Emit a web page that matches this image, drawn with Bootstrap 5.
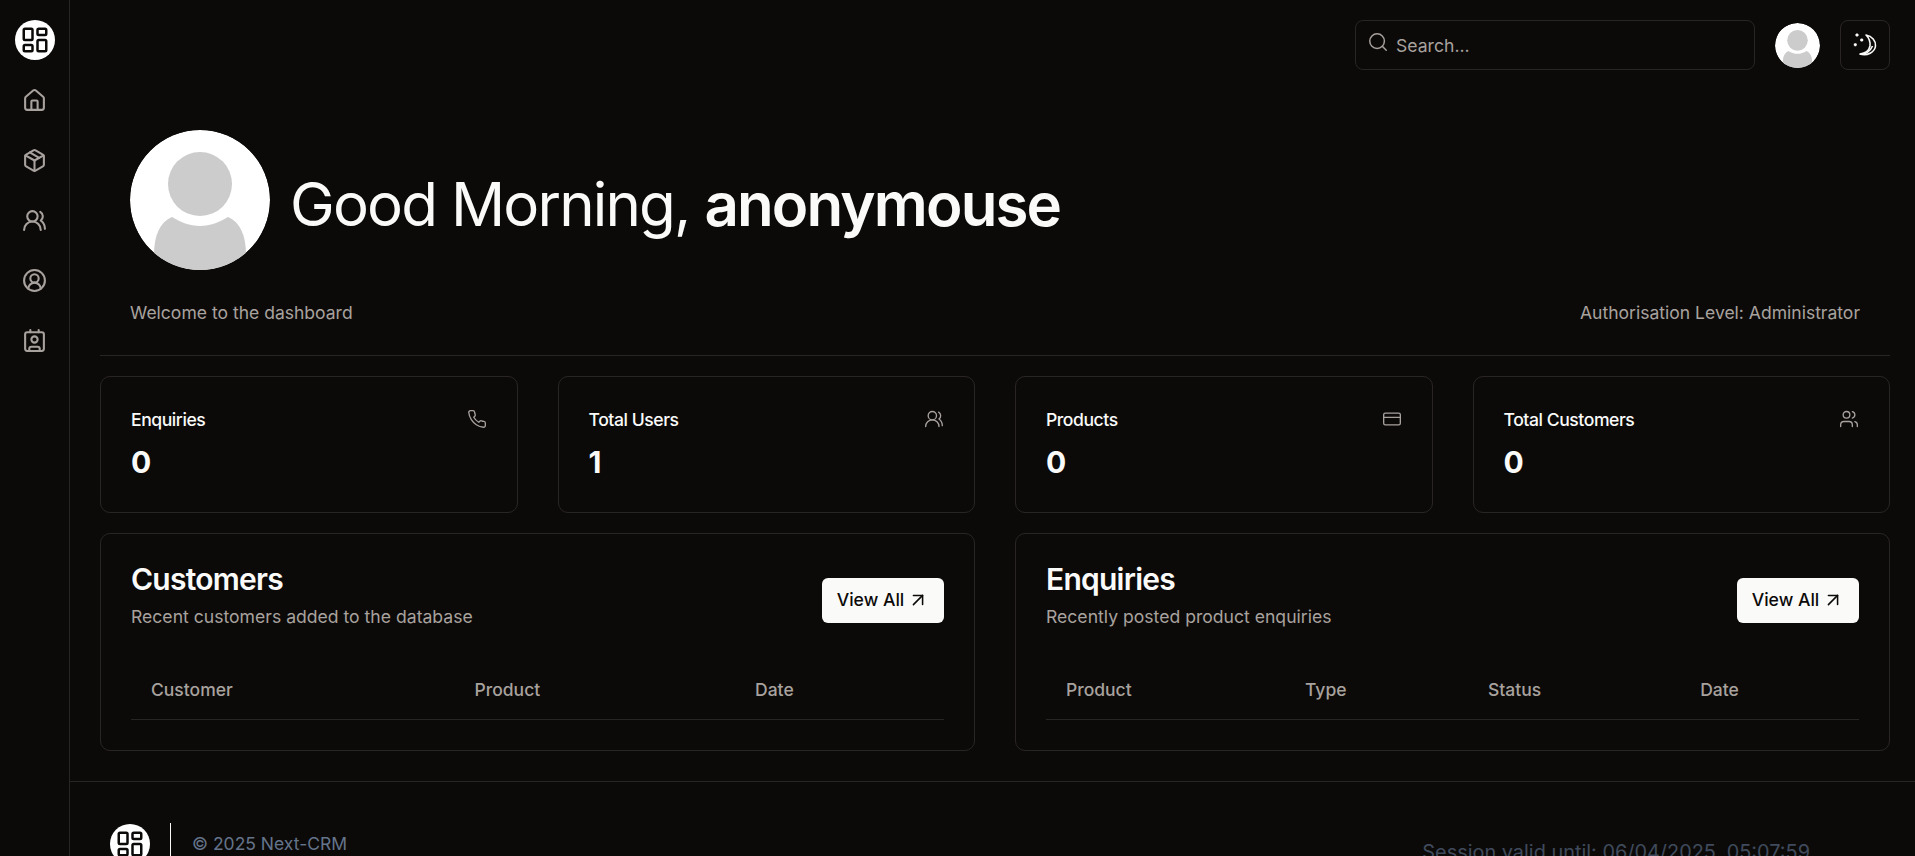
<!DOCTYPE html>
<html lang="en">
<head>
  <meta charset="UTF-8" />
  <meta name="viewport" content="width=device-width, initial-scale=1.0"/>
  <title>Next-CRM</title>
  <link href="https://cdn.jsdelivr.net/npm/bootstrap@5.3.0/dist/css/bootstrap.min.css" rel="stylesheet">
  <style>
    html, body {
      height: 100vh;
      overflow: hidden;
    }
    body {
      background-color: #0c0a09;
      color: #fafaf9;
      font-family: Inter, "Liberation Sans", sans-serif;
    }
    svg { display: block; flex: none; }
    .ico {
      fill: none;
      stroke: currentColor;
      stroke-width: 2;
      stroke-linecap: round;
      stroke-linejoin: round;
    }
    .ico-thin { stroke-width: 1.6; }
    .side-rail {
      width: 70px;
      height: 100vh;
      border-right: 1px solid #292524;
      color: #a8a29e;
      padding-top: 20px;
      flex: none;
    }
    .brand-dot {
      width: 40px;
      height: 40px;
      border-radius: 50%;
      background: #fff;
      color: #0c0a09;
    }
    .side-rail .brand-dot { margin-bottom: 10px; }
    .rail-link {
      width: 36px;
      height: 60px;
      color: #a8a29e;
    }
    .top-bar {
      height: 90px;
      padding: 20px 25px 0 0;
      gap: 20px;
    }
    .search-box {
      width: 400px;
      height: 50px;
      border: 1px solid #292524;
      border-radius: 8px;
      padding-left: 11px;
      color: #a8a29e;
    }
    .search-box svg { margin-top: -6px; }
    .search-box input {
      background: transparent;
      border: 0;
      box-shadow: none;
      color: #fafaf9;
      padding: 2px 0 0 7px;
      font-size: 17.6px;
    }
    .search-box input::placeholder { color: #a8a29e; opacity: 1; }
    .search-box input:focus { background: transparent; color: #fafaf9; box-shadow: none; }
    .theme-btn {
      width: 50px;
      height: 50px;
      border: 1px solid #292524;
      border-radius: 8px;
      color: #fafaf9;
      padding: 0;
    }
    .avatar-pic { border-radius: 50%; }
    .avatar-top { margin-top: 3px; }
    .page-wrap { padding: 0 25px 0 30px; }
    .hero-zone { padding: 40px 30px 0; }
    .hero-title {
      font-size: 60px;
      font-weight: 400;
      line-height: 1;
      letter-spacing: -1.86px;
      margin: 0 0 0 20px;
      padding-top: 8px;
      color: #fafaf9;
    }
    .hero-title b { font-weight: 600; }
    .hero-sub {
      margin-top: 31px;
      padding-bottom: 30px;
      color: #a8a29e;
      font-size: 17.55px;
      line-height: 24px;
    }
    .top-rule {
      border-top: 1px solid #292524;
      margin-bottom: 20px;
    }
    .stat-row { --bs-gutter-x: 40px; --bs-gutter-y: 20px; }
    .panel-card {
      background: transparent;
      border: 1px solid #292524;
      border-radius: 10px;
      color: #fafaf9;
      padding: 30px;
    }
    .stat-box { padding-bottom: 32px; }
    .stat-name {
      font-size: 17.6px;
      font-weight: 500;
      line-height: 24px;
      letter-spacing: -0.45px;
      color: #fafaf9;
      position: relative;
      top: 1px;
    }
    .stat-ico { color: #a8a29e; }
    .stat-val {
      font-size: 30px;
      font-weight: 700;
      line-height: 36px;
      margin-top: 13px;
    }
    .panel-head { height: 72px; }
    .panel-title {
      font-size: 30px;
      font-weight: 600;
      line-height: 36px;
      letter-spacing: -0.75px;
      margin: -3px 0 0;
    }
    .panel-sub {
      font-size: 17.6px;
      line-height: 24px;
      color: #a8a29e;
      margin: 8px 0 0;
    }
    .view-btn {
      height: 45px;
      width: 122px;
      background: #fafaf9;
      color: #0c0a09;
      border: 0;
      border-radius: 6px;
      font-size: 17.6px;
      font-weight: 450;
      padding: 0;
      gap: 3px;
    }
    .view-btn svg { stroke-width: 1.7; }
    .data-tbl {
      --bs-table-bg: transparent;
      --bs-table-color: #a8a29e;
      margin: 20px 0 0;
      table-layout: fixed;
    }
    .data-tbl th {
      height: 63px;
      padding: 6px 0 0 20px;
      font-size: 17.5px;
      font-weight: 500;
      color: #a8a29e;
      border-bottom: 1px solid #292524;
      vertical-align: middle;
    }
    .cw-a { width: 39.8%; }
    .cw-b { width: 34.5%; }
    .cw-c { width: 25.7%; }
    .ew-a { width: 29.4%; }
    .ew-b { width: 22.5%; }
    .ew-c { width: 26.1%; }
    .ew-d { width: 22%; }
    .foot-bar {
      border-top: 1px solid #292524;
      margin-top: 30px;
      padding: 42px 105px 0 40px;
    }
    .foot-rule {
      width: 1px;
      height: 40px;
      background: #fafaf9;
      margin: -1px 21px 0 20px;
    }
    .foot-copy {
      color: #64748b;
      font-size: 17.5px;
      line-height: 28px;
      padding-top: 6px;
    }
    .foot-session {
      color: #3f4a5c;
      font-size: 19.9px;
      line-height: 28px;
      padding-top: 14px;
    }
  </style>
</head>
<body>
  <div class="d-flex">
    <nav class="side-rail d-flex flex-column align-items-center">
      <a href="#" class="brand-dot d-flex align-items-center justify-content-center">
        <svg class="ico" width="30" height="30" viewBox="0 0 24 24"><rect x="3" y="3" width="7" height="9" rx="1"/><rect x="14" y="3" width="7" height="5" rx="1"/><rect x="14" y="12" width="7" height="9" rx="1"/><rect x="3" y="16" width="7" height="5" rx="1"/></svg>
      </a>
      <a href="#" class="rail-link d-flex align-items-center justify-content-center">
        <svg class="ico" width="25" height="25" viewBox="0 0 24 24"><path d="M15 21v-8a1 1 0 0 0-1-1h-4a1 1 0 0 0-1 1v8"/><path d="M3 10a2 2 0 0 1 .709-1.528l7-5.999a2 2 0 0 1 2.582 0l7 5.999A2 2 0 0 1 21 10v9a2 2 0 0 1-2 2H5a2 2 0 0 1-2-2z"/></svg>
      </a>
      <a href="#" class="rail-link d-flex align-items-center justify-content-center">
        <svg class="ico" width="25" height="25" viewBox="0 0 24 24"><path d="M21 8a2 2 0 0 0-1-1.730l-7-4a2 2 0 0 0-2 0l-7 4A2 2 0 0 0 3 8v8a2 2 0 0 0 1 1.730l7 4a2 2 0 0 0 2 0l7-4A2 2 0 0 0 21 16Z"/><path d="m3.300 7 8.700 5 8.700-5"/><path d="M12 22V12"/><path d="m7.500 4.270 9 5.150"/></svg>
      </a>
      <a href="#" class="rail-link d-flex align-items-center justify-content-center">
        <svg class="ico" width="25" height="25" viewBox="0 0 24 24"><path d="M18 21a8 8 0 0 0-16 0"/><circle cx="10" cy="8" r="5"/><path d="M22 20c0-3.370-2-6.500-4-8a5 5 0 0 0-.45-8.300"/></svg>
      </a>
      <a href="#" class="rail-link d-flex align-items-center justify-content-center">
        <svg class="ico" width="25" height="25" viewBox="0 0 24 24"><circle cx="12" cy="12" r="10"/><circle cx="12" cy="10" r="4"/><path d="M18 20a6 6 0 0 0-12 0"/></svg>
      </a>
      <a href="#" class="rail-link d-flex align-items-center justify-content-center">
        <svg class="ico" width="25" height="25" viewBox="0 0 24 24"><path d="M16 2v2"/><path d="M8 2v2"/><path d="M7 22v-2a2 2 0 0 1 2-2h6a2 2 0 0 1 2 2v2"/><circle cx="12" cy="11" r="3"/><rect x="3" y="4" width="18" height="18" rx="2"/></svg>
      </a>
    </nav>

    <div class="flex-grow-1">
      <header class="top-bar d-flex justify-content-end align-items-start">
        <div class="search-box d-flex align-items-center">
          <svg class="ico ico-thin" width="22" height="22" viewBox="0 0 24 24"><circle cx="11" cy="11" r="8"/><path d="m21 21-4.300-4.300"/></svg>
          <input class="form-control" type="text" placeholder="Search...">
        </div>
        <svg class="avatar-pic avatar-top" width="45" height="45" viewBox="0 0 140 140"><circle cx="70" cy="70" r="70" fill="#fff"/><circle cx="70" cy="54" r="32" fill="#ccc"/><path d="M24 125C24 105 30 92 42 87C50 92 60 96 70 96C80 96 90 92 98 87C110 92 116 105 116 125L100 140H40Z" fill="#ccc"/></svg>
        <button class="btn theme-btn d-flex align-items-center justify-content-center" aria-label="Theme">
          <svg width="26" height="26" viewBox="0 0 26 26" fill="none" stroke="#fafaf9" stroke-width="1.600" stroke-linejoin="round"><path d="M14 3C20 4 24 9 23.500 14C23 20 15 24.500 8 22C13 21.500 17 19 18 14C18.500 10 17 6 14 3Z"/><path d="M8 22C13 23 18 20 20.500 14"/><path d="M5 1.500v3M3.500 3h3M9.700 6.500v3M8.200 8h3M3.300 11.200v3M1.800 12.700h3" stroke-width="1.800"/></svg>
        </button>
      </header>

      <main class="page-wrap">
        <section class="hero-zone">
          <div class="d-flex align-items-center">
            <svg class="avatar-pic" width="140" height="140" viewBox="0 0 140 140"><circle cx="70" cy="70" r="70" fill="#fff"/><circle cx="70" cy="54" r="32" fill="#ccc"/><path d="M24 125C24 105 30 92 42 87C50 92 60 96 70 96C80 96 90 92 98 87C110 92 116 105 116 125L100 140H40Z" fill="#ccc"/></svg>
            <h1 class="hero-title">Good Morning, <b>anonymouse</b></h1>
          </div>
          <div class="hero-sub d-flex justify-content-between">
            <span>Welcome to the dashboard</span>
            <span>Authorisation Level: Administrator</span>
          </div>
        </section>
        <div class="top-rule"></div>

        <div class="row stat-row">
          <div class="col-3">
            <div class="card panel-card stat-box">
              <div class="d-flex justify-content-between align-items-center">
                <span class="stat-name">Enquiries</span>
                <svg class="ico ico-thin stat-ico" width="20" height="20" viewBox="0 0 24 24"><path d="M22 16.920v3a2 2 0 0 1-2.180 2 19.790 19.790 0 0 1-8.630-3.070 19.500 19.500 0 0 1-6-6 19.790 19.790 0 0 1-3.070-8.670A2 2 0 0 1 4.110 2h3a2 2 0 0 1 2 1.720 12.840 12.840 0 0 0 .7 2.810 2 2 0 0 1-.45 2.110L8.090 9.910a16 16 0 0 0 6 6l1.270-1.270a2 2 0 0 1 2.110-.45 12.840 12.840 0 0 0 2.810.7A2 2 0 0 1 22 16.920z"/></svg>
              </div>
              <div class="stat-val">0</div>
            </div>
          </div>
          <div class="col-3">
            <div class="card panel-card stat-box">
              <div class="d-flex justify-content-between align-items-center">
                <span class="stat-name">Total Users</span>
                <svg class="ico ico-thin stat-ico" width="20" height="20" viewBox="0 0 24 24"><path d="M18 21a8 8 0 0 0-16 0"/><circle cx="10" cy="8" r="5"/><path d="M22 20c0-3.370-2-6.500-4-8a5 5 0 0 0-.45-8.300"/></svg>
              </div>
              <div class="stat-val">1</div>
            </div>
          </div>
          <div class="col-3">
            <div class="card panel-card stat-box">
              <div class="d-flex justify-content-between align-items-center">
                <span class="stat-name">Products</span>
                <svg class="ico ico-thin stat-ico" width="20" height="20" viewBox="0 0 24 24"><rect x="2" y="5" width="20" height="14" rx="2"/><path d="M2 10h20"/></svg>
              </div>
              <div class="stat-val">0</div>
            </div>
          </div>
          <div class="col-3">
            <div class="card panel-card stat-box">
              <div class="d-flex justify-content-between align-items-center">
                <span class="stat-name">Total Customers</span>
                <svg class="ico ico-thin stat-ico" width="20" height="20" viewBox="0 0 24 24"><path d="M16 21v-2a4 4 0 0 0-4-4H6a4 4 0 0 0-4 4v2"/><circle cx="9" cy="7" r="4"/><path d="M22 21v-2a4 4 0 0 0-3-3.870"/><path d="M16 3.130a4 4 0 0 1 0 7.750"/></svg>
              </div>
              <div class="stat-val">0</div>
            </div>
          </div>

          <div class="col-6">
            <div class="card panel-card">
              <div class="panel-head d-flex justify-content-between align-items-center">
                <div class="align-self-start">
                  <h2 class="panel-title">Customers</h2>
                  <p class="panel-sub">Recent customers added to the database</p>
                </div>
                <a href="#" class="btn view-btn d-flex align-items-center justify-content-center">View All
                  <svg class="ico" width="22" height="22" viewBox="0 0 24 24"><path d="M7 7h10v10"/><path d="M7 17 17 7"/></svg>
                </a>
              </div>
              <table class="table data-tbl">
                <colgroup><col class="cw-a"><col class="cw-b"><col class="cw-c"></colgroup>
                <thead><tr><th>Customer</th><th>Product</th><th>Date</th></tr></thead>
              </table>
            </div>
          </div>
          <div class="col-6">
            <div class="card panel-card">
              <div class="panel-head d-flex justify-content-between align-items-center">
                <div class="align-self-start">
                  <h2 class="panel-title">Enquiries</h2>
                  <p class="panel-sub">Recently posted product enquiries</p>
                </div>
                <a href="#" class="btn view-btn d-flex align-items-center justify-content-center">View All
                  <svg class="ico" width="22" height="22" viewBox="0 0 24 24"><path d="M7 7h10v10"/><path d="M7 17 17 7"/></svg>
                </a>
              </div>
              <table class="table data-tbl">
                <colgroup><col class="ew-a"><col class="ew-b"><col class="ew-c"><col class="ew-d"></colgroup>
                <thead><tr><th>Product</th><th>Type</th><th>Status</th><th>Date</th></tr></thead>
              </table>
            </div>
          </div>
        </div>
      </main>

      <footer class="foot-bar d-flex justify-content-between align-items-start">
        <div class="d-flex align-items-start">
          <div class="brand-dot d-flex align-items-center justify-content-center">
            <svg class="ico" width="30" height="30" viewBox="0 0 24 24"><rect x="3" y="3" width="7" height="9" rx="1"/><rect x="14" y="3" width="7" height="5" rx="1"/><rect x="14" y="12" width="7" height="9" rx="1"/><rect x="3" y="16" width="7" height="5" rx="1"/></svg>
          </div>
          <div class="foot-rule"></div>
          <div class="foot-copy">© 2025 Next-CRM</div>
        </div>
        <div class="foot-session">Session valid until: 06/04/2025, 05:07:59</div>
      </footer>
    </div>
  </div>
  <script src="https://cdn.jsdelivr.net/npm/bootstrap@5.3.0/dist/js/bootstrap.bundle.min.js"></script>
</body>
</html>
